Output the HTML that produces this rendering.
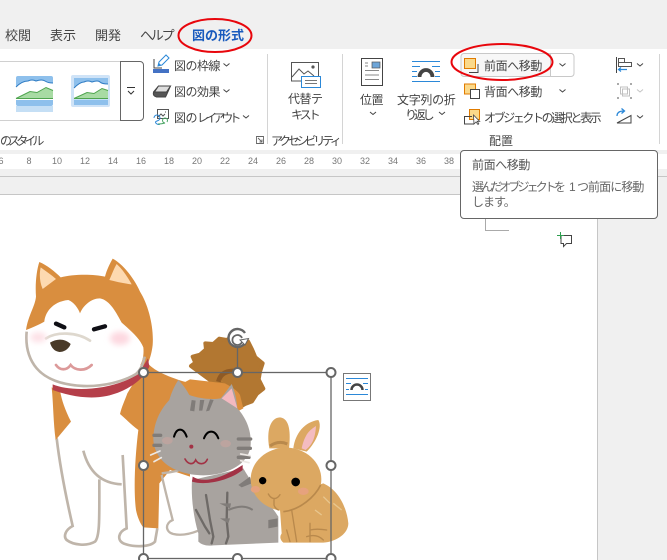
<!DOCTYPE html>
<html lang="ja"><head><meta charset="utf-8"><title>図の形式</title>
<style>
html,body{margin:0;padding:0}
body{width:667px;height:560px;overflow:hidden;position:relative;background:#f0f0f0;font-family:"Liberation Sans","Noto Sans CJK JP",sans-serif;color:#444}
div{position:absolute}
.t{position:absolute;white-space:nowrap;font-size:12px;line-height:16px;height:16px;z-index:3;letter-spacing:-.5px}
.r{position:absolute;font-size:9px;line-height:10px;color:#777;width:20px;text-align:center;top:156px}
svg{position:absolute;left:0;top:0}
</style></head><body>
<div style="left:0;top:49px;width:667px;height:101px;background:#fff"></div>
<div style="left:0;top:154px;width:667px;height:15px;background:#fff"></div>
<div style="left:0;top:176px;width:667px;height:1px;background:#c6c6c6"></div>
<div style="left:0;top:194px;width:597px;height:366px;background:#fff"></div>
<div style="left:0;top:194px;width:597px;height:1px;background:#c6c6c6"></div>
<div style="left:597px;top:194px;width:1px;height:366px;background:#c6c6c6"></div>

<span class="t" style="left:5px;top:28px;font-size:13px;letter-spacing:0">校閲</span>
<span class="t" style="left:50px;top:28px;font-size:13px;letter-spacing:0">表示</span>
<span class="t" style="left:95px;top:28px;font-size:13px;letter-spacing:0">開発</span>
<span class="t" style="left:140px;top:28px;font-size:13px;letter-spacing:-2.2px">ヘルプ</span>
<span class="t" style="left:192px;top:28px;font-size:13px;font-weight:700;color:#185abd;letter-spacing:0">図の形式</span>

<span class="t" style="left:174px;top:58px">図の枠線</span>
<span class="t" style="left:174px;top:84px">図の効果</span>
<span class="t" style="left:174px;top:110px">図の<span style="letter-spacing:-3.9px">レイアウト</span></span>
<span class="t" style="left:0;top:133px;letter-spacing:-3.9px">のスタイル</span>
<span class="t" style="left:271px;top:133px;letter-spacing:-3.4px">アクセシビリティ</span>
<span class="t" style="left:288px;top:91px">代替テ</span>
<span class="t" style="left:291px;top:107px;letter-spacing:-3px">キスト</span>
<span class="t" style="left:360px;top:92px">位置</span>
<span class="t" style="left:397px;top:92px;letter-spacing:-.3px">文字列の折</span>
<span class="t" style="left:405px;top:107px;letter-spacing:-3.2px">り返し</span>
<span class="t" style="left:484px;top:58px;letter-spacing:-.4px">前面へ移動</span>
<span class="t" style="left:484px;top:84px;letter-spacing:-.4px">背面へ移動</span>
<span class="t" style="left:484px;top:110px;letter-spacing:-2.4px">オブジェクトの選択と表示</span>
<span class="t" style="left:489px;top:133px;letter-spacing:0">配置</span>

<span class="r" style="left:-9px">6</span><span class="r" style="left:19px">8</span><span class="r" style="left:47px">10</span><span class="r" style="left:75px">12</span><span class="r" style="left:103px">14</span><span class="r" style="left:131px">16</span><span class="r" style="left:159px">18</span><span class="r" style="left:187px">20</span><span class="r" style="left:215px">22</span><span class="r" style="left:243px">24</span><span class="r" style="left:271px">26</span><span class="r" style="left:299px">28</span><span class="r" style="left:327px">30</span><span class="r" style="left:355px">32</span><span class="r" style="left:383px">34</span><span class="r" style="left:411px">36</span><span class="r" style="left:439px">38</span>

<svg width="667" height="560" viewBox="0 0 667 560" fill="none">
<defs><filter id="b" x="-50%" y="-50%" width="200%" height="200%"><feGaussianBlur stdDeviation="9"/></filter></defs>
<!-- ribbon lines -->
<path d="M267.5 54V144M342.5 54V144M659.5 54V144" stroke="#d4d4d4"/>
<path d="M0 61.5H120M0 120.5H120" stroke="#d0d0d0"/>
<path d="M120.5 61.5H140a3.5 3.5 0 0 1 3.5 3.5V117a3.5 3.5 0 0 1-3.5 3.5H120.5Z" stroke="#666" fill="#fff"/>
<path d="M127 87.5H135M128 91l3 3 3-3" stroke="#333"/>
<!-- thumbs -->
<rect x="16" y="76" width="37" height="30" rx="2" fill="#8ec0ec"/>
<path d="M16 87q6-6 12-6 4-2 8 0 6-2 9 0t8 2V100H16Z" fill="#fff"/>
<path d="M16 87q6-6 12-6 4-2 8 0 6-2 9 0t8 2" stroke="#2f7cc4"/>
<path d="M16 98.5l14-7 7 1 9-5 7 3v8Z" fill="#a8dba4"/><path d="M16 98.5l14-7 7 1 9-5 7 3" stroke="#4ea44e"/>
<path d="M16 98.5H53" stroke="#4ea44e"/>
<rect x="16" y="106" width="37" height="6" fill="#c5dff5"/>
<rect x="71" y="75" width="39" height="32" rx="2" fill="#cfe3f7"/>
<rect x="74" y="78" width="34" height="27" fill="#8ec0ec"/>
<path d="M74 88q6-6 10-6 4-2 8 0 6-2 8 0t8 2V99.5H74Z" fill="#fff"/>
<path d="M74 88q6-6 10-6 4-2 8 0 6-2 8 0t8 2" stroke="#2f7cc4"/>
<path d="M74 98.5l13-6 7 1 8-5 6 2v8Z" fill="#a8dba4"/><path d="M74 98.5l13-6 7 1 8-5 6 2" stroke="#4ea44e"/>
<path d="M74 98.5H108" stroke="#4ea44e"/>

<!-- style icons -->
<rect x="153" y="69" width="16" height="4" fill="#4472c4"/>
<path d="M154 59V68H162" stroke="#444" fill="none"/>
<path d="M158 66l1-4 7-7 3 3-7 7Z" stroke="#2b88d8" fill="#fff"/>
<path d="M158 66l1-3 2 2Z" fill="#2b88d8"/>
<path d="M153.5 92l5-6h12l-4 9-1 2h-9q-4-1-3-5Z" fill="#555" stroke="#444"/>
<path d="M158.500 86h12l-4 6h-12Z" fill="#ddd" stroke="#444"/>
<rect x="157.5" y="109.5" width="11" height="9" stroke="#555" fill="#fff"/>
<path d="M158 117l3-3 2 2 2-2M165 112h1" stroke="#555"/>
<path d="M154 118a3 3 0 1 1 6 0q0 2-3 3-3 1 0 3 2 1 3 0" stroke="#2b88d8"/>
<path d="M158 124q4 0 7-1a2.5 2.5 0 1 1 2-1" stroke="#4aa564"/>
<path d="M223.5 63.5l3 2.500 3-2.500M223.500 89.500l3 2.500 3-2.500M243 115.500l3 2.500 3-2.500M370 112l3 2.500 3-2.500M439 112l3 2.500 3-2.500M559.500 63.500l3 2.500 3-2.500M559.500 89.500l3 2.500 3-2.500M637 63.500l3 2.500 3-2.500M637 115.500l3 2.500 3-2.500" stroke="#444"/>
<path d="M637 89.500l3 2.500 3-2.500" stroke="#c4c4c4"/>
<path d="M256.500 136.500h7v7h-7ZM258 138l4 4M262 139.500v2.500h-2.500" stroke="#666" stroke-width=".9"/>

<!-- alt text icon -->
<path d="M310 81H291.500V62.500H318.500V76" stroke="#555"/>
<path d="M292 77l7-8 5 5 4-3 6 5" stroke="#555"/>
<circle cx="313" cy="67" r="1.600" fill="#555"/>
<rect x="301.500" y="76.500" width="19" height="11" fill="#fff" stroke="#2b88d8"/>
<path d="M305 80.500h12M305 83.500h12" stroke="#777"/>

<!-- position icon -->
<rect x="361.500" y="58.500" width="21" height="27" fill="#fff" stroke="#444"/>
<rect x="372" y="62" width="8" height="6" fill="#6da5d8" stroke="#555" stroke-width=".7"/>
<path d="M365 63h3M365 66h3M365 70.500h14M365 75h14M365 79.500h14" stroke="#888"/>
<!-- wrap icon -->
<path d="M412 61.500h28M412 81.500h28" stroke="#2b88d8"/>
<path d="M412 66.500h8M432 66.500h8M412 71.500h5M435 71.500h5M412 76.500h5M435 76.500h5" stroke="#2b88d8"/>
<path d="M419.500 77a6.500 7 0 0 1 13 0" stroke="#444" stroke-width="3.800"/>

<!-- bring-forward split button -->
<path d="M550.500 53.500H571a3 3 0 0 1 3 3V73.500a3 3 0 0 1-3 3H550.500" stroke="#c8c8c8"/>
<path d="M464 53.500H550.500V76.500H464a3 3 0 0 1-3-3V56.500a3 3 0 0 1 3-3Z" stroke="#c8c8c8" fill="#f7f7f7"/>
<rect x="464.500" y="58.500" width="11" height="10" fill="#fbd98a" stroke="#e07b00"/>
<path d="M478 64v8.500h-9" stroke="#444"/>
<rect x="464.500" y="84" width="11" height="10" fill="#fbd98a" stroke="#e07b00"/>
<rect x="470.500" y="89.500" width="9" height="9" fill="#fff" stroke="#444"/>
<rect x="469.500" y="109.500" width="10" height="10" fill="#fbd98a" stroke="#e07b00"/>
<path d="M472 116.500H464.500V124H474" stroke="#444"/>
<path d="M473.500 115l.5 9 2-2 2 2.500 .8-.8-1.600-2.400h2.500Z" fill="#fff" stroke="#444" stroke-width=".8"/>

<!-- align icons -->
<path d="M616.500 57V73" stroke="#444"/>
<rect x="618.500" y="58.500" width="6" height="4" stroke="#555"/>
<rect x="618.500" y="62.500" width="13" height="4" stroke="#555"/>
<path d="M627 69.500h-8M621 67.500l-2.500 2 2.500 2" stroke="#2b88d8" stroke-width="1.200"/>
<g stroke="#c0c0c0"><rect x="620.500" y="87" width="7" height="7"/><rect x="622.500" y="89" width="7" height="7"/></g>
<g fill="#aaa"><rect x="617" y="83" width="2" height="2"/><rect x="630" y="83" width="2" height="2"/><rect x="617" y="97" width="2" height="2"/><rect x="630" y="97" width="2" height="2"/></g>
<path d="M617 123L631 115.500V123Z" stroke="#444"/>
<path d="M617 116q0-5 7-5M621.500 108.500l3 2.500-3 2.500" stroke="#2b88d8" stroke-width="1.300"/>

<!-- red ellipses -->
<ellipse cx="215" cy="35.500" rx="36.500" ry="16.500" stroke="#e8060c" stroke-width="2"/>
<ellipse cx="502" cy="62" rx="50.500" ry="18" stroke="#e8060c" stroke-width="2"/>

<!-- margin marks -->
<path d="M485.500 218V230.500H509" stroke="#aaa"/>
<path d="M561 235.500h10.500v8h-5l-3 3v-3h-2.500Z" stroke="#444" fill="#fff"/>
<path d="M560.500 232v7M557 235.500h7" stroke="#2e9e4f"/>

<!-- TAIL behind everything -->
<g transform="translate(130 320) scale(.33333)">
<path d="M183 138L196 128 188 110 210 104 228 88 226 70 250 72 268 56 290 60 305 52 332 64 354 64 366 88 376 112 398 130 390 155 386 178 400 206 380 222 366 244 345 252 328 262 300 200 240 180Z" fill="#b27731" stroke="#b27731" stroke-width="12" stroke-linejoin="round"/>
<path d="M265 185Q275 145 330 155" stroke="#8f5a24" stroke-width="14"/>
</g>

<!-- DOG (zoom-3 coordinates) -->
<g transform="translate(10 250) scale(.33333)">
<path d="M140 565C150 650 170 750 188 828C165 840 160 860 170 870C190 885 230 890 255 875C270 860 268 800 268 688" stroke="#bfb5aa" stroke-width="8"/>
<path d="M220 602C235 660 270 700 335 703M338 615L350 835C325 845 320 870 340 880C370 892 420 892 435 875L442 835" stroke="#bfb5aa" stroke-width="8"/>
<path d="M48 240C55 195 75 170 78 140C75 100 80 60 88 36C110 45 135 65 152 82C190 72 250 72 285 80C290 60 300 40 308 26C335 40 370 80 390 125C415 165 432 230 428 285C425 310 420 325 414 340C430 360 470 380 540 400V680L480 660 448 700 445 835 400 832C390 820 382 800 378 780C370 720 375 620 385 540C365 525 345 505 330 492C335 470 345 450 352 430L400 350 300 300Z" fill="#d98e3f"/>
<path d="M92 52C110 65 125 75 138 87L98 117C88 95 88 70 92 52ZM320 42C340 60 355 85 365 103C340 100 318 95 298 90C305 75 312 55 320 42Z" fill="#fdd9b0"/>
<path d="M48 240C70 232 85 225 103 215C105 190 125 155 175 150C190 155 205 175 210 190C220 165 245 145 270 145C300 150 320 190 335 218C360 240 390 265 400 292C405 340 380 375 330 395C270 412 200 415 150 402C100 390 60 350 50 300Z" fill="#fff"/>
<path d="M125 412C130 460 130 520 137 570L183 515C165 480 155 450 150 422Z" fill="#d98e3f"/>
<path d="M128 403C180 425 300 425 385 372L414 325 418 350C400 390 350 425 290 438C230 450 170 435 128 420Z" fill="#b53f4a"/>
<path d="M50 245C46 290 55 325 80 355C110 390 160 405 220 408C280 410 340 395 378 372C392 360 400 340 404 320" stroke="#bfb5aa" stroke-width="8"/>
<path d="M138 221L163 232M252 238L285 229" stroke="#0f0f15" stroke-width="13" stroke-linecap="round"/>
<path d="M108 265C140 245 200 245 240 272" stroke="#ded8ce" stroke-width="8" stroke-linecap="round"/>
<path d="M120 278C140 265 165 265 182 282C175 300 160 306 148 306C132 304 124 292 120 278Z" fill="#493a28"/>
<path d="M138 345C150 362 170 362 182 345C195 362 225 365 245 345" stroke="#dc9a9a" stroke-width="8" stroke-linecap="round"/>
<g filter="url(#b)"><ellipse cx="85" cy="262" rx="24" ry="15" fill="#fde0e6"/><ellipse cx="330" cy="265" rx="30" ry="20" fill="#fdd8e0"/></g>
</g>

<!-- CAT, RABBIT (zoom-4 coordinates) -->
<g transform="translate(130 320) scale(.33333)">
<path d="M285 190L270 180C280 190 320 205 330 225L340 265 200 340 140 200 180 178Z" fill="#dc8f3d"/>
<path d="M95 465C105 510 118 560 128 600C105 610 105 635 130 642C155 648 185 640 205 632M95 460Q120 458 145 452" stroke="#bfb5aa" stroke-width="7"/>
<path d="M186 480C183 530 190 590 205 640L205 665Q220 680 250 676L445 668 445 590C420 550 370 500 340 445Z" fill="#a8a39f"/>
<path d="M70 355C72 300 95 265 118 240C125 215 135 195 145 180C160 195 170 210 178 225C205 235 245 240 272 235C285 220 295 205 305 192C315 215 320 240 322 265C350 295 365 335 362 375C358 425 310 455 250 464C190 472 130 455 100 425C80 405 70 380 70 355Z" fill="#a8a39f"/>
<path d="M275 235L305 205 322 265Z" fill="#f3b9c0"/>
<path d="M185 240l-5 32 13 2 4-32ZM210 240l-3 32 10 0 6-32ZM240 238l-12 36 10-2 13-32Z" fill="#807c79"/>
<path d="M72 346h20M72 376h20M325 357h37M325 385h36M325 412h32" stroke="#807c79" stroke-width="10" stroke-linecap="round"/>
<path d="M62 405l28-12M72 425l22-12M332 402l28 5M332 422l25 6" stroke="#ece8e4" stroke-width="5" stroke-linecap="round"/>
<path d="M132 350C140 322 160 322 170 350M222 355C232 328 255 328 265 355" stroke="#000" stroke-width="6" stroke-linecap="round"/>
<path d="M165 417C175 435 190 435 197 420C205 435 225 435 232 418" stroke="#a23245" stroke-width="5" stroke-linecap="round"/>
<circle cx="184" cy="380" r="6" fill="#a23245"/>
<ellipse cx="112" cy="362" rx="16" ry="11" fill="#c9a5a0" opacity=".6"/>
<ellipse cx="287" cy="371" rx="16" ry="11" fill="#c9a5a0" opacity=".6"/>
<path d="M188 470C220 490 270 478 338 435L338 450C300 480 230 498 186 485Z" fill="#a23245"/>
<path d="M228 525L240 600 250 650 245 670M292 518L290 600 295 650 288 670M198 570L225 620 238 640" stroke="#6e6a67" stroke-width="7" stroke-linecap="round"/>
<path d="M295 570Q340 550 368 570" stroke="#807c79" stroke-width="6"/>
<path d="M325 495l35-25 5 20-30 12ZM268 550h35l-3 15ZM270 595h30l-5 15ZM415 600l28-5v25l-28 5Z" fill="#807c79"/>
<!-- rabbit -->
<path d="M418 385C408 330 422 293 450 292C480 295 482 340 477 385Z" fill="#dca862"/>
<path d="M490 385C495 340 525 305 565 300C578 320 560 365 530 395Z" fill="#dca862"/>
<path d="M515 385C525 340 540 330 558 318C555 360 545 375 527 390Z" fill="#f4bcc0"/>
<path d="M420 378Q445 360 472 372" stroke="#b9894c" stroke-width="9"/>
<path d="M450 570C470 540 540 500 580 490C625 510 650 560 655 610C655 640 620 665 580 668L460 668Q445 655 455 640Z" fill="#dca862"/>
<ellipse cx="468" cy="478" rx="106" ry="95" fill="#dca862"/>
<path d="M460 575C510 570 555 530 572 495" stroke="#b9894c" stroke-width="5"/>
<path d="M415 522C425 540 440 540 450 524M432 535V555Q435 565 445 570M485 570L500 665M470 630L480 665M540 610V665M540 630Q560 625 590 630M530 650Q560 640 580 660" stroke="#b9894c" stroke-width="4" stroke-linecap="round"/>
<circle cx="398" cy="482" r="11" fill="#000"/><circle cx="497" cy="486" r="13" fill="#000"/>
<ellipse cx="376" cy="508" rx="14" ry="10" fill="#e6a27d"/><ellipse cx="520" cy="514" rx="16" ry="11" fill="#e6a27d"/>
<path d="M580 530l20 20M610 550l25 20M555 570l20 15" stroke="#e8c68e" stroke-width="4"/>
</g>

<!-- selection -->
<rect x="143.500" y="372.500" width="187.500" height="186" stroke="#666" stroke-width="1.300"/>
<path d="M237.500 372V347" stroke="#666" stroke-width="1.300"/>
<g fill="#fff" stroke="#666" stroke-width="2">
<circle cx="143.500" cy="372.500" r="4.500"/><circle cx="237.500" cy="372.500" r="4.500"/><circle cx="331" cy="372.500" r="4.500"/>
<circle cx="143.500" cy="465.500" r="4.500"/><circle cx="331" cy="465.500" r="4.500"/>
<circle cx="143.500" cy="558.500" r="4.500"/><circle cx="237.500" cy="558.500" r="4.500"/><circle cx="331" cy="558.500" r="4.500"/>
</g>
<circle cx="237.500" cy="338" r="9" fill="#fff"/>
<path d="M245 333A9 9 0 1 0 246 341" stroke="#666" stroke-width="2.400"/>
<path d="M242 338A5 5 0 1 0 242 342" stroke="#666" stroke-width="1.800"/>
<path d="M240 340l8.500-1.500-3.500 6.500Z" fill="#fff" stroke="#666"/>
<!-- layout button -->
<rect x="343.500" y="373.500" width="27" height="27" fill="#fff" stroke="#777"/>
<path d="M346 378.500h22M346 394.500h22" stroke="#2b88d8"/>
<path d="M346 383.500h5M363 383.500h5M346 389.500h3M365 389.500h3" stroke="#2b88d8"/>
<path d="M351.500 390a5.500 5.500 0 0 1 11 0" stroke="#444" stroke-width="2.500"/>
</svg>

<!-- tooltip -->
<div style="left:460px;top:150px;width:196px;height:67px;background:#fff;border:1px solid #666;border-radius:4px;z-index:2"></div>
<span class="t" style="left:472px;top:157px;color:#555;letter-spacing:-.4px">前面へ移動</span>
<span class="t" style="left:472px;top:179px;color:#666;letter-spacing:-2.9px">選んだオブジェクトを</span>
<span class="t" style="left:569px;top:179px;color:#666;letter-spacing:0">1</span>
<span class="t" style="left:577px;top:179px;color:#666;letter-spacing:0">つ</span>
<span class="t" style="left:588px;top:179px;color:#666;letter-spacing:-.9px">前面に移動</span>
<span class="t" style="left:472px;top:194px;color:#666;letter-spacing:-1px">します。</span>
</body></html>
